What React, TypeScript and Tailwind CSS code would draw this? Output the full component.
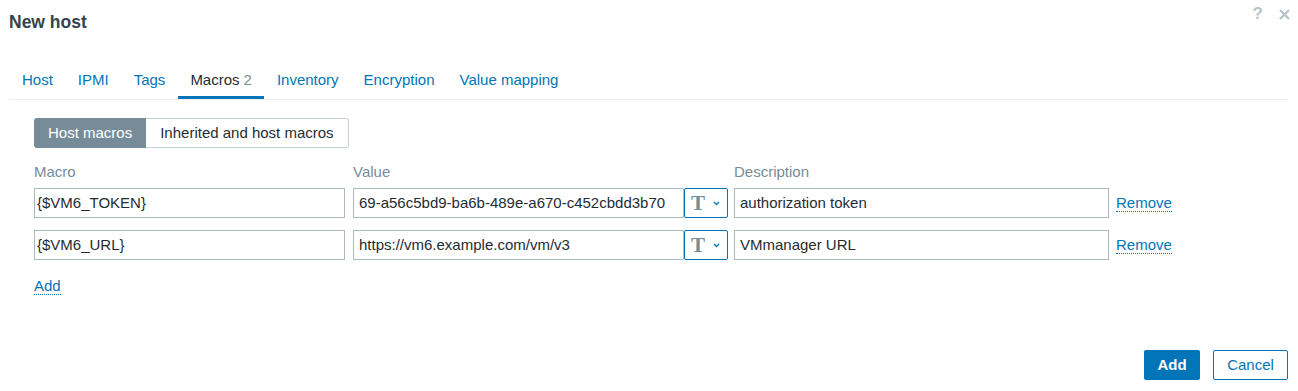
import type { ReactNode } from "react";

const TABS = ["Host", "IPMI", "Tags", "Macros", "Inventory", "Encryption", "Value mapping"];

const MACROS = [
  { macro: "{$VM6_TOKEN}", value: "69-a56c5bd9-ba6b-489e-a670-c452cbdd3b70", description: "authorization token" },
  { macro: "{$VM6_URL}", value: "https://vm6.example.com/vm/v3", description: "VMmanager URL" },
];

function Field({ width, children }: { width: string; children: ReactNode }) {
  return (
    <div
      className={`flex h-[30px] shrink-0 items-center border border-[#acbbc2] bg-white text-[15px] text-[#1f2c33] ${width}`}
    >
      <span className="truncate">{children}</span>
    </div>
  );
}

function TypeButton() {
  return (
    <div className="flex h-[30px] w-[44px] shrink-0 items-center rounded-[2px] border border-[#0275b8] bg-white pl-[6px]">
      <span className="font-['Liberation_Serif',serif] text-[21px] font-bold leading-none text-[#768d99]">T</span>
      <svg width="7" height="5" viewBox="0 0 7 5" className="ml-[8px] mt-[1px]">
        <path d="M1 1l2.5 2.5L6 1" fill="none" stroke="#0275b8" strokeWidth="1.3" />
      </svg>
    </div>
  );
}

function DottedLink({ children }: { children: ReactNode }) {
  return (
    <span className="border-b border-dotted border-[#0275b8] text-[15px] text-[#0275b8]">{children}</span>
  );
}

export default function App() {
  return (
    <div className="flex h-[391px] w-[1298px] flex-col bg-white font-['Liberation_Sans',Arial,sans-serif] text-[#1f2c33]">
      {/* header */}
      <div className="flex h-[62px] shrink-0 items-start justify-between pl-[9px] pr-[8px]">
        <div className="pt-[12px] text-[17.5px] font-bold leading-[20px] text-[#34434e]">New host</div>
        <div className="flex items-center gap-[16px] pt-[5px]">
          <span className="text-[17px] font-bold leading-[18px] text-[#b8c4ca]">?</span>
          <svg width="11" height="11" viewBox="0 0 11 11" className="mt-[1px]">
            <path d="M1 1l9 9M10 1l-9 9" stroke="#b8c4ca" strokeWidth="2.4" />
          </svg>
        </div>
      </div>

      {/* tabs */}
      <div className="ml-[9px] mr-[10px] flex shrink-0 border-b border-[#ebeef0] pl-[0.5px]">
        {TABS.map((t) => {
          const active = t === "Macros";
          return (
            <div
              key={t}
              className={`flex h-[37px] items-center border-b-[3px] px-[12.5px] pt-[2px] text-[15px] ${
                active ? "border-[#0275b8] text-[#1f2c33]" : "border-transparent text-[#0275b8]"
              }`}
            >
              {t}
              {active && <span className="ml-[4px] text-[#768d99]">2</span>}
            </div>
          );
        })}
      </div>

      {/* macros */}
      <div className="flex flex-col pl-[34px]">
        <div className="mt-[18px] flex">
          <div className="flex h-[30px] items-center rounded-l-[3px] bg-[#768d99] px-[14px] text-[15px] text-white">
            Host macros
          </div>
          <div className="flex h-[30px] items-center rounded-r-[3px] border border-l-0 border-[#c5d0d6] px-[14px] text-[15px] text-[#1f2c33]">
            Inherited and host macros
          </div>
        </div>

        <div className="mt-[14px] flex h-[20px] text-[15px] leading-[20px] text-[#768d99]">
          <div className="w-[319px]">Macro</div>
          <div className="w-[381px]">Value</div>
          <div>Description</div>
        </div>

        <div className="mt-[6px] flex flex-col gap-[12px]">
          {MACROS.map((m) => (
            <div key={m.macro} className="flex items-center">
              <Field width="w-[311px] pl-[2px]">{m.macro}</Field>
              <div className="ml-[8px] flex">
                <Field width="w-[331px] pl-[5px]">{m.value}</Field>
                <TypeButton />
              </div>
              <div className="ml-[6px]">
                <Field width="w-[375px] pl-[5px]">{m.description}</Field>
              </div>
              <div className="ml-[7px]">
                <DottedLink>Remove</DottedLink>
              </div>
            </div>
          ))}
        </div>

        <div className="mt-[16px] leading-[20px]">
          <DottedLink>Add</DottedLink>
        </div>
      </div>

      {/* footer */}
      <div className="mt-auto flex justify-end gap-[13px] pb-[11px] pr-[10px]">
        <button className="h-[30px] w-[56px] rounded-[2px] bg-[#0275b8] text-[15px] font-bold text-white">Add</button>
        <button className="h-[30px] w-[75px] rounded-[2px] border border-[#0275b8] bg-white text-[15px] text-[#0275b8]">
          Cancel
        </button>
      </div>
    </div>
  );
}
